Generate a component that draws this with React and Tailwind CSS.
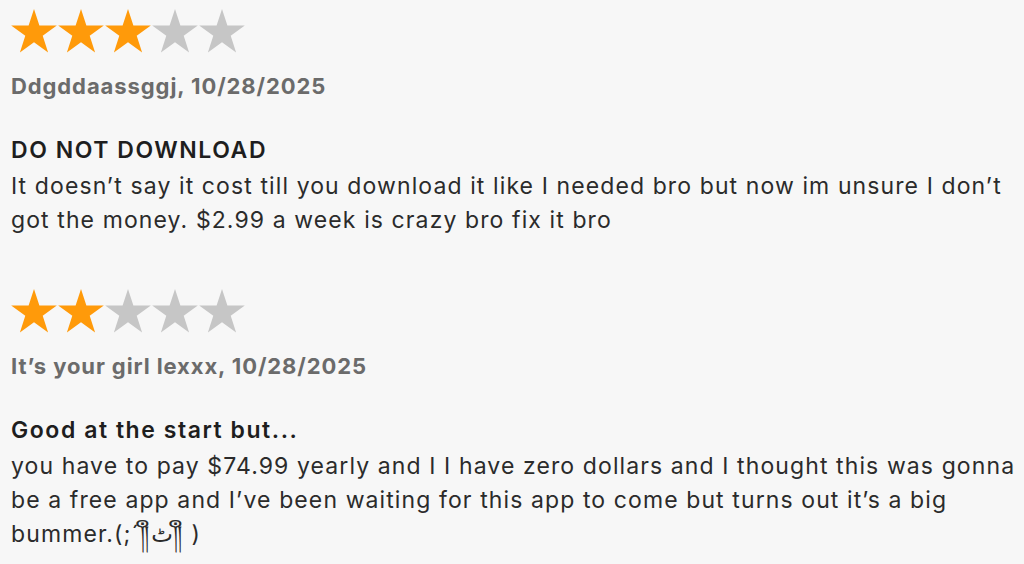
import React from 'react';

const reviews = [
  {
    rating: 3,
    name: 'Ddgddaassggj, 10/28/2025',
    title: 'DO NOT DOWNLOAD',
    body: 'It doesn’t say it cost till you download it like I needed bro but now im unsure I don’t got the money. $2.99 a week is crazy bro fix it bro',
  },
  {
    rating: 2,
    name: 'It’s your girl lexxx, 10/28/2025',
    title: 'Good at the start but...',
    body: 'you have to pay $74.99 yearly and I I have zero dollars and I thought this was gonna be a free app and I’ve been waiting for this app to come but turns out it’s a big bummer.(;´༎ຶٹ༎ຶ )',
  },
];

const Star = ({ filled }) => (
  <svg width="46" height="46" viewBox="0 0 46 46">
    <polygon
      points="23,1 28.39,17.58 45.82,17.58 31.71,27.83 37.11,44.42 23,34.17 8.89,44.42 14.29,27.83 0.18,17.58 17.61,17.58"
      fill={filled ? '#ff9a0a' : '#c6c6c6'}
    />
  </svg>
);

function Review({ r }) {
  return (
    <div className="flex flex-col">
      <div className="flex gap-[1px]">
        {[1, 2, 3, 4, 5].map(i => (
          <Star key={i} filled={i <= r.rating} />
        ))}
      </div>
      <div className="mt-[15px] text-[22px] leading-[34px] font-bold tracking-[0.9px] text-[#6b6b6b]">{r.name}</div>
      <div className="mt-[30px] text-[23px] leading-[34px] font-semibold tracking-[1.55px] text-[#1e1e1e]">{r.title}</div>
      <p className="mt-[2px] text-[23px] leading-[34px] tracking-[1.1px] text-[#2b2b2b]">{r.body}</p>
    </div>
  );
}

export default function App() {
  return (
    <div
      className="w-[1024px] h-[564px] overflow-hidden bg-[#f7f7f7] pl-[11px] pr-[3px] pt-[8px] flex flex-col gap-[51px]"
      style={{ fontFamily: 'Inter, "Noto Sans", "DejaVu Sans", sans-serif' }}
    >
      {reviews.map((r, i) => (
        <Review key={i} r={r} />
      ))}
    </div>
  );
}
